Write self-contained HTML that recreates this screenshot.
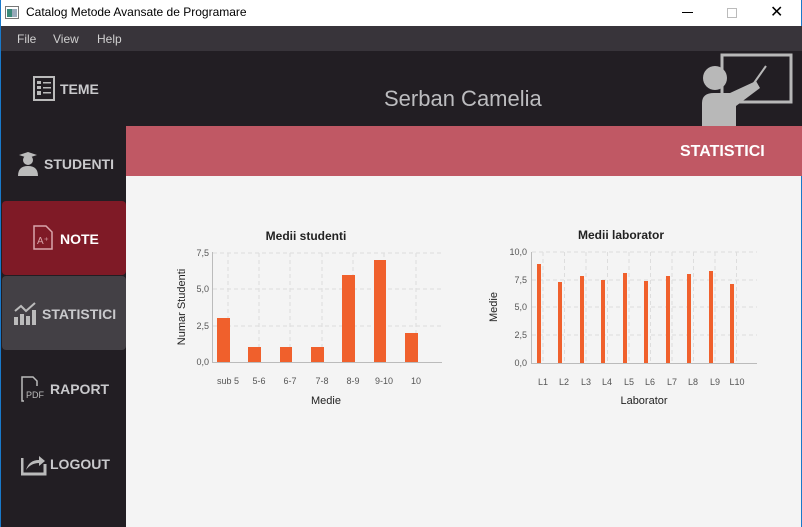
<!DOCTYPE html><html><head><style>
*{margin:0;padding:0;box-sizing:border-box}
body{width:802px;height:527px;overflow:hidden;font-family:"Liberation Sans",sans-serif;background:#221e23;position:relative}
.abs{position:absolute}
.lbl{position:absolute;color:#c9c9cc;font-weight:bold;font-size:14px}
</style></head><body>
<div class="abs" style="left:0;top:0;width:802px;height:26px;background:#fff;border-left:1px solid #1979ca;border-right:1px solid #1979ca"></div>
<svg class="abs" style="left:5px;top:6px" width="14" height="13"><rect x="0.5" y="0.5" width="13" height="12" fill="#fff" stroke="#777"/><rect x="2" y="3" width="5" height="8" fill="#3a8a7a"/><rect x="7" y="3" width="5" height="8" fill="#9ab"/></svg>
<div class="abs" style="left:26px;top:5px;font-size:12px;color:#000">Catalog Metode Avansate de Programare</div>
<div class="abs" style="left:682px;top:12px;width:11px;height:1px;background:#000"></div>
<div class="abs" style="left:727px;top:8px;width:10px;height:10px;border:1px solid #bbb"></div>
<div class="abs" style="left:770px;top:2px;font-size:16px;color:#000">✕</div>
<div class="abs" style="left:0;top:26px;width:802px;height:25px;background:#38343a;border-left:1px solid #1979ca"></div>
<div class="abs" style="left:17px;top:32px;font-size:12px;color:#d0d0d0">File</div>
<div class="abs" style="left:53px;top:32px;font-size:12px;color:#d0d0d0">View</div>
<div class="abs" style="left:97px;top:32px;font-size:12px;color:#d0d0d0">Help</div>
<div class="abs" style="left:0;top:51px;width:1px;height:476px;background:#1979ca"></div>
<svg class="abs" style="left:33px;top:76px" width="22" height="25"><rect x="1" y="1" width="20" height="23" fill="none" stroke="#bbb" stroke-width="2"/><rect x="4" y="5" width="4" height="3" fill="#bbb"/><rect x="10" y="6" width="8" height="1.5" fill="#bbb"/><rect x="4" y="10" width="4" height="3" fill="#bbb"/><rect x="10" y="11" width="8" height="1.5" fill="#bbb"/><rect x="4" y="15" width="4" height="4" fill="#bbb"/><rect x="10" y="16" width="8" height="1.5" fill="#bbb"/></svg>
<div class="lbl" style="left:60px;top:81px">TEME</div>
<svg class="abs" style="left:17px;top:151px" width="22" height="25"><polygon points="2,4 11,1 20,4 11,7" fill="#bbb"/><circle cx="11" cy="9" r="5" fill="#bbb"/><path d="M1,25 Q1,15 11,15 Q21,15 21,25Z" fill="#bbb"/></svg>
<div class="lbl" style="left:44px;top:156px">STUDENTI</div>
<div class="abs" style="left:2px;top:201px;width:124px;height:74px;background:#7f1a26;border-radius:4px"></div>
<svg class="abs" style="left:33px;top:225px" width="20" height="25"><path d="M1,1 H13 L19,7 V24 H1Z" fill="none" stroke="#d9a5ab" stroke-width="1.5"/><text x="4" y="19" font-size="10" fill="#d9a5ab" font-family="Liberation Sans">A⁺</text></svg>
<div class="lbl" style="left:60px;top:231px;color:#fff">NOTE</div>
<div class="abs" style="left:2px;top:276px;width:124px;height:74px;background:#434045;border-radius:4px"></div>
<svg class="abs" style="left:13px;top:300px" width="26" height="26"><rect x="1" y="17" width="4" height="8" fill="#bbb"/><rect x="7" y="14" width="4" height="11" fill="#bbb"/><rect x="13" y="16" width="4" height="9" fill="#bbb"/><rect x="19" y="10" width="4" height="15" fill="#bbb"/><path d="M2,11 L8,6 L13,11 L22,3" stroke="#bbb" stroke-width="2" fill="none"/></svg>
<div class="lbl" style="left:42px;top:306px">STATISTICI</div>
<svg class="abs" style="left:21px;top:376px" width="26" height="26"><path d="M3,25 H1 V1 H12 L16,5 V10" fill="none" stroke="#bbb" stroke-width="1.5"/><text x="5" y="22" font-size="9" fill="#bbb" font-family="Liberation Sans">PDF</text></svg>
<div class="lbl" style="left:50px;top:381px">RAPORT</div>
<svg class="abs" style="left:21px;top:452px" width="26" height="24"><path d="M1,6 V22 H24 V12" fill="none" stroke="#bbb" stroke-width="3"/><path d="M5,18 Q8,8 18,8 V4 L24,9 L18,14 V11 Q10,11 5,18Z" fill="#bbb"/></svg>
<div class="lbl" style="left:50px;top:456px">LOGOUT</div>
<div class="abs" style="left:384px;top:86px;font-size:22px;color:#bcbcbf">Serban Camelia</div>
<svg class="abs" style="left:690px;top:51px" width="112" height="75"><rect x="32" y="4" width="69" height="47" fill="none" stroke="#b8b8b8" stroke-width="3"/><circle cx="25" cy="27" r="12" fill="#b8b8b8"/><path d="M12,75 V52 Q12,42 24,42 H40 L66,30 L70,37 L46,55 V75Z" fill="#b8b8b8"/><path d="M64,32 L76,15" stroke="#b8b8b8" stroke-width="2"/></svg>
<div class="abs" style="left:126px;top:126px;width:676px;height:50px;background:#c05864"></div>
<div class="abs" style="left:680px;top:143px;font-size:16px;color:#fff;font-weight:bold">STATISTICI</div>
<div class="abs" style="left:126px;top:176px;width:676px;height:351px;background:#f4f4f4;border-right:1px solid #1979ca"></div>
<svg class="abs" style="left:0;top:0" width="802" height="527" font-family="Liberation Sans" >
<g stroke="#ddd" stroke-dasharray="4,3" stroke-width="1">
<line x1="213" y1="253" x2="442" y2="253"/><line x1="213" y1="289" x2="442" y2="289"/><line x1="213" y1="326" x2="442" y2="326"/>
<line x1="228" y1="253" x2="228" y2="362"/><line x1="259" y1="253" x2="259" y2="362"/><line x1="290" y1="253" x2="290" y2="362"/><line x1="322" y1="253" x2="322" y2="362"/><line x1="353" y1="253" x2="353" y2="362"/><line x1="384" y1="253" x2="384" y2="362"/><line x1="416" y1="253" x2="416" y2="362"/>
<line x1="532" y1="252" x2="757" y2="252"/><line x1="532" y1="280" x2="757" y2="280"/><line x1="532" y1="307" x2="757" y2="307"/><line x1="532" y1="335" x2="757" y2="335"/>
<line x1="543" y1="252" x2="543" y2="363"/><line x1="564.5" y1="252" x2="564.5" y2="363"/><line x1="586" y1="252" x2="586" y2="363"/><line x1="607.5" y1="252" x2="607.5" y2="363"/><line x1="629" y1="252" x2="629" y2="363"/><line x1="650.5" y1="252" x2="650.5" y2="363"/><line x1="672" y1="252" x2="672" y2="363"/><line x1="693.5" y1="252" x2="693.5" y2="363"/><line x1="715" y1="252" x2="715" y2="363"/><line x1="736.5" y1="252" x2="736.5" y2="363"/>
</g>
<g fill="#f0602c">
<rect x="217" y="318" width="13" height="44"/><rect x="248" y="347" width="13" height="15"/><rect x="280" y="347" width="12" height="15"/><rect x="311" y="347" width="13" height="15"/><rect x="342" y="275" width="13" height="87"/><rect x="374" y="260" width="12" height="102"/><rect x="405" y="333" width="13" height="29"/>
<rect x="537" y="264" width="4" height="99"/><rect x="558" y="282" width="4" height="81"/><rect x="580" y="276" width="4" height="87"/><rect x="601" y="280" width="4" height="83"/><rect x="623" y="273" width="4" height="90"/><rect x="644" y="281" width="4" height="82"/><rect x="666" y="276" width="4" height="87"/><rect x="687" y="274" width="4" height="89"/><rect x="709" y="271" width="4" height="92"/><rect x="730" y="284" width="4" height="79"/>
</g>
<g stroke="#bbb"><line x1="212.5" y1="252" x2="212.5" y2="362"/><line x1="212" y1="362.5" x2="442" y2="362.5"/><line x1="531.5" y1="252" x2="531.5" y2="363"/><line x1="531" y1="363.5" x2="757" y2="363.5"/></g>
<g font-size="9" fill="#555" text-anchor="end"><text x="209" y="256">7,5</text><text x="209" y="292">5,0</text><text x="209" y="329">2,5</text><text x="209" y="365">0,0</text>
<text x="527" y="255">10,0</text><text x="527" y="283">7,5</text><text x="527" y="310">5,0</text><text x="527" y="338">2,5</text><text x="527" y="366">0,0</text></g>
<g font-size="9" fill="#555" text-anchor="middle"><text x="228" y="384">sub 5</text><text x="259" y="384">5-6</text><text x="290" y="384">6-7</text><text x="322" y="384">7-8</text><text x="353" y="384">8-9</text><text x="384" y="384">9-10</text><text x="416" y="384">10</text>
<text x="543" y="385">L1</text><text x="564" y="385">L2</text><text x="586" y="385">L3</text><text x="607" y="385">L4</text><text x="629" y="385">L5</text><text x="650" y="385">L6</text><text x="672" y="385">L7</text><text x="693" y="385">L8</text><text x="715" y="385">L9</text><text x="737" y="385">L10</text></g>
<g font-size="11" fill="#222" text-anchor="middle"><text x="326" y="404">Medie</text><text x="644" y="404">Laborator</text>
<text transform="translate(185,307) rotate(-90)">Numar Studenti</text><text transform="translate(497,307) rotate(-90)">Medie</text></g>
<g font-size="12" fill="#222" font-weight="bold" text-anchor="middle"><text x="306" y="240">Medii studenti</text><text x="621" y="239">Medii laborator</text></g>
</svg>
</body></html>
